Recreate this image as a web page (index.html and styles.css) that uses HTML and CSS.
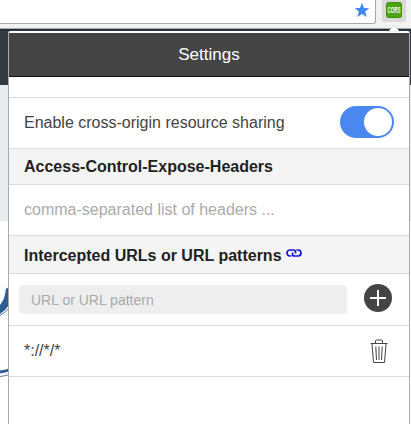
FILE: index.html
```html
<!DOCTYPE html>
<html lang="en">
<head>
<meta charset="utf-8">
<title>Settings</title>
<link rel="stylesheet" href="styles.css">
</head>
<body>
<header class="toolbar">
  <div class="omnibox">
    <svg class="star" viewBox="0 0 16 16"><path d="M8 .8 10 6 15.3 6.2 11.2 9.6 12.7 15 8 12 3.3 15 4.8 9.6.7 6.2 6 6z"/></svg>
  </div>
  <div class="extension"><svg class="cors" viewBox="0 0 16 16"><rect x=".5" y=".5" width="15" height="15" rx="2"/><text x="1.5" y="11" textLength="13" lengthAdjust="spacingAndGlyphs">CORS</text></svg></div>
</header>
<div class="page">
  <div class="page-nav"></div>
  <div class="page-hero"></div>
  <svg class="page-art" viewBox="0 0 9 110">
    <path class="fill" d="M9 15 5.8 17Q5.5 26 0 33V42Q5 39 9 33z"/>
    <path class="line" d="M0 43.5Q5 41 9 36M0 101Q5 100.5 9 99M0 104.5Q5 104 9 102.5"/>
    <path class="fill" d="M0 98.5Q5 98 9 96.5V99Q5 100.5 0 101z"/>
  </svg>
</div>
<main class="popup">
  <h1 class="title">Settings</h1>
  <div class="spacer"></div>
  <div class="row enable"><span class="label">Enable cross-origin resource sharing</span><span class="toggle"></span></div>
  <h2 class="divider">Access-Control-Expose-Headers</h2>
  <div class="row headers"><span class="placeholder">comma-separated list of headers ...</span></div>
  <h2 class="divider patterns"><span>Intercepted URLs or URL patterns</span>
    <svg class="link" viewBox="0 0 16 10"><path d="M5.4 8H4A3 3 0 0 1 4 2H7.5A2 2 0 0 1 9.5 4V5.5M10.4 2H12A3 3 0 0 1 12 8H8.5A2 2 0 0 1 6.5 6V4.5"/></svg>
  </h2>
  <div class="row add"><span class="field">URL or URL pattern</span>
    <svg class="plus" viewBox="0 0 28 28"><circle cx="14" cy="14" r="14"/><path d="M14 6V22M6 14H22"/></svg>
  </div>
  <div class="row entry"><span class="label">*://*/*</span>
    <svg class="trash" viewBox="0 0 18 25"><path d="M.5 4.5H17.5M5.5 4V2Q5.5 1 6.5 1H11.5Q12.5 1 12.5 2V4M2 5 3.5 23.5H14.5L16 5M5.8 7.5 6.5 21M9 7.5V21M12.2 7.5 11.5 21"/></svg>
  </div>
</main>
<svg class="arrow" viewBox="0 0 12 8"><path d="M0 8 6 1 12 8z"/></svg>
</body>
</html>
```
FILE: styles.css
```css
* { box-sizing: border-box; }
body {
  margin: 0;
  width: 411px;
  height: 424px;
  overflow: hidden;
  position: relative;
  background: #fff;
  font: 16px/20px "Liberation Sans", Arial, sans-serif;
}
svg { display: block; flex: none; }
.toolbar {
  height: 29px;
  display: flex;
  gap: 6px;
  background: #f2f2f2;
  border-bottom: 1px solid #a5a8aa;
}
.omnibox {
  width: 376px;
  height: 24px;
  display: flex;
  justify-content: flex-end;
  padding: 2px 5px 0 0;
  background: #fff;
  border: solid #a9a9a9;
  border-width: 0 1px 1px 0;
  border-radius: 0 0 3px;
}
.star { width: 16px; height: 16px; fill: #4285f4; }
.extension {
  width: 24px;
  height: 22px;
  padding: 2px 4px;
  background: #d9d9d9;
  border-radius: 0 0 2px 2px;
}
.cors { width: 16px; height: 16px; overflow: visible; }
.cors rect { fill: #4ba411; stroke: #3b8f0b; }
.cors text { font: bold 8.5px "Liberation Sans", Arial, sans-serif; fill: #fff; }
.page-nav { height: 56px; background: #343a42; border-top: 2px solid #2a3136; }
.page-hero { height: 136px; background: #e8ebee; }
.page-art { width: 9px; height: 110px; margin-top: 51px; }
.page-art .fill { fill: #2b5c92; }
.page-art .line { fill: none; stroke: #2b5c92; stroke-width: .8; }
.popup {
  position: absolute;
  top: 31px;
  left: 8px;
  width: 402px;
  height: 393px;
  padding-top: 2px;
  background: #fff;
  border: solid #aaa;
  border-width: 0 1px;
  border-radius: 2px 2px 0 0;
}
.title {
  margin: 0;
  height: 44px;
  background: #444;
  border-bottom: 1px solid #111;
  color: #fff;
  font-size: 17px;
  font-weight: 400;
  line-height: 43px;
  text-align: center;
}
.spacer { height: 21px; border-bottom: 1px solid #ddd; }
.row {
  height: 51px;
  display: flex;
  align-items: center;
  justify-content: space-between;
  padding: 0 15px;
  border-bottom: 1px solid #ddd;
  color: #444;
}
.toggle {
  width: 54px;
  height: 32px;
  margin-bottom: 2px;
  padding: 2px;
  border-radius: 16px;
  background: #4a87ee;
}
.toggle::after {
  content: "";
  display: block;
  width: 28px;
  height: 28px;
  margin-left: 22px;
  border-radius: 50%;
  background: #fff;
}
.divider {
  margin: 0;
  height: 36px;
  padding: 0 15px;
  background: #f4f4f4;
  border-bottom: 1px solid #ddd;
  color: #222;
  font-size: 16px;
  line-height: 35px;
}
.patterns { height: 38px; display: flex; gap: 4px; line-height: 39px; }
.link { width: 16px; height: 10px; margin-top: 12px; fill: none; stroke: #1111df; stroke-width: 1.7; }
.placeholder { color: #aaa; }
.add { height: 52px; padding: 0 17px 0 10px; }
.field {
  width: 328px;
  height: 29px;
  margin-bottom: 1px;
  padding-left: 12px;
  border-radius: 4px;
  background: #eee;
  color: #aaa;
  font-size: 14px;
  line-height: 30px;
}
.plus { width: 28px; height: 28px; margin-top: -4px; fill: #444; }
.plus path { stroke: #fff; stroke-width: 2; }
.trash { width: 18px; height: 25px; margin-right: 6px; fill: none; stroke: #444; stroke-width: 1; }
.arrow { position: absolute; left: 388px; top: 24px; width: 12px; height: 8px; fill: #fff; stroke: #bbb; stroke-width: .5; }
```
